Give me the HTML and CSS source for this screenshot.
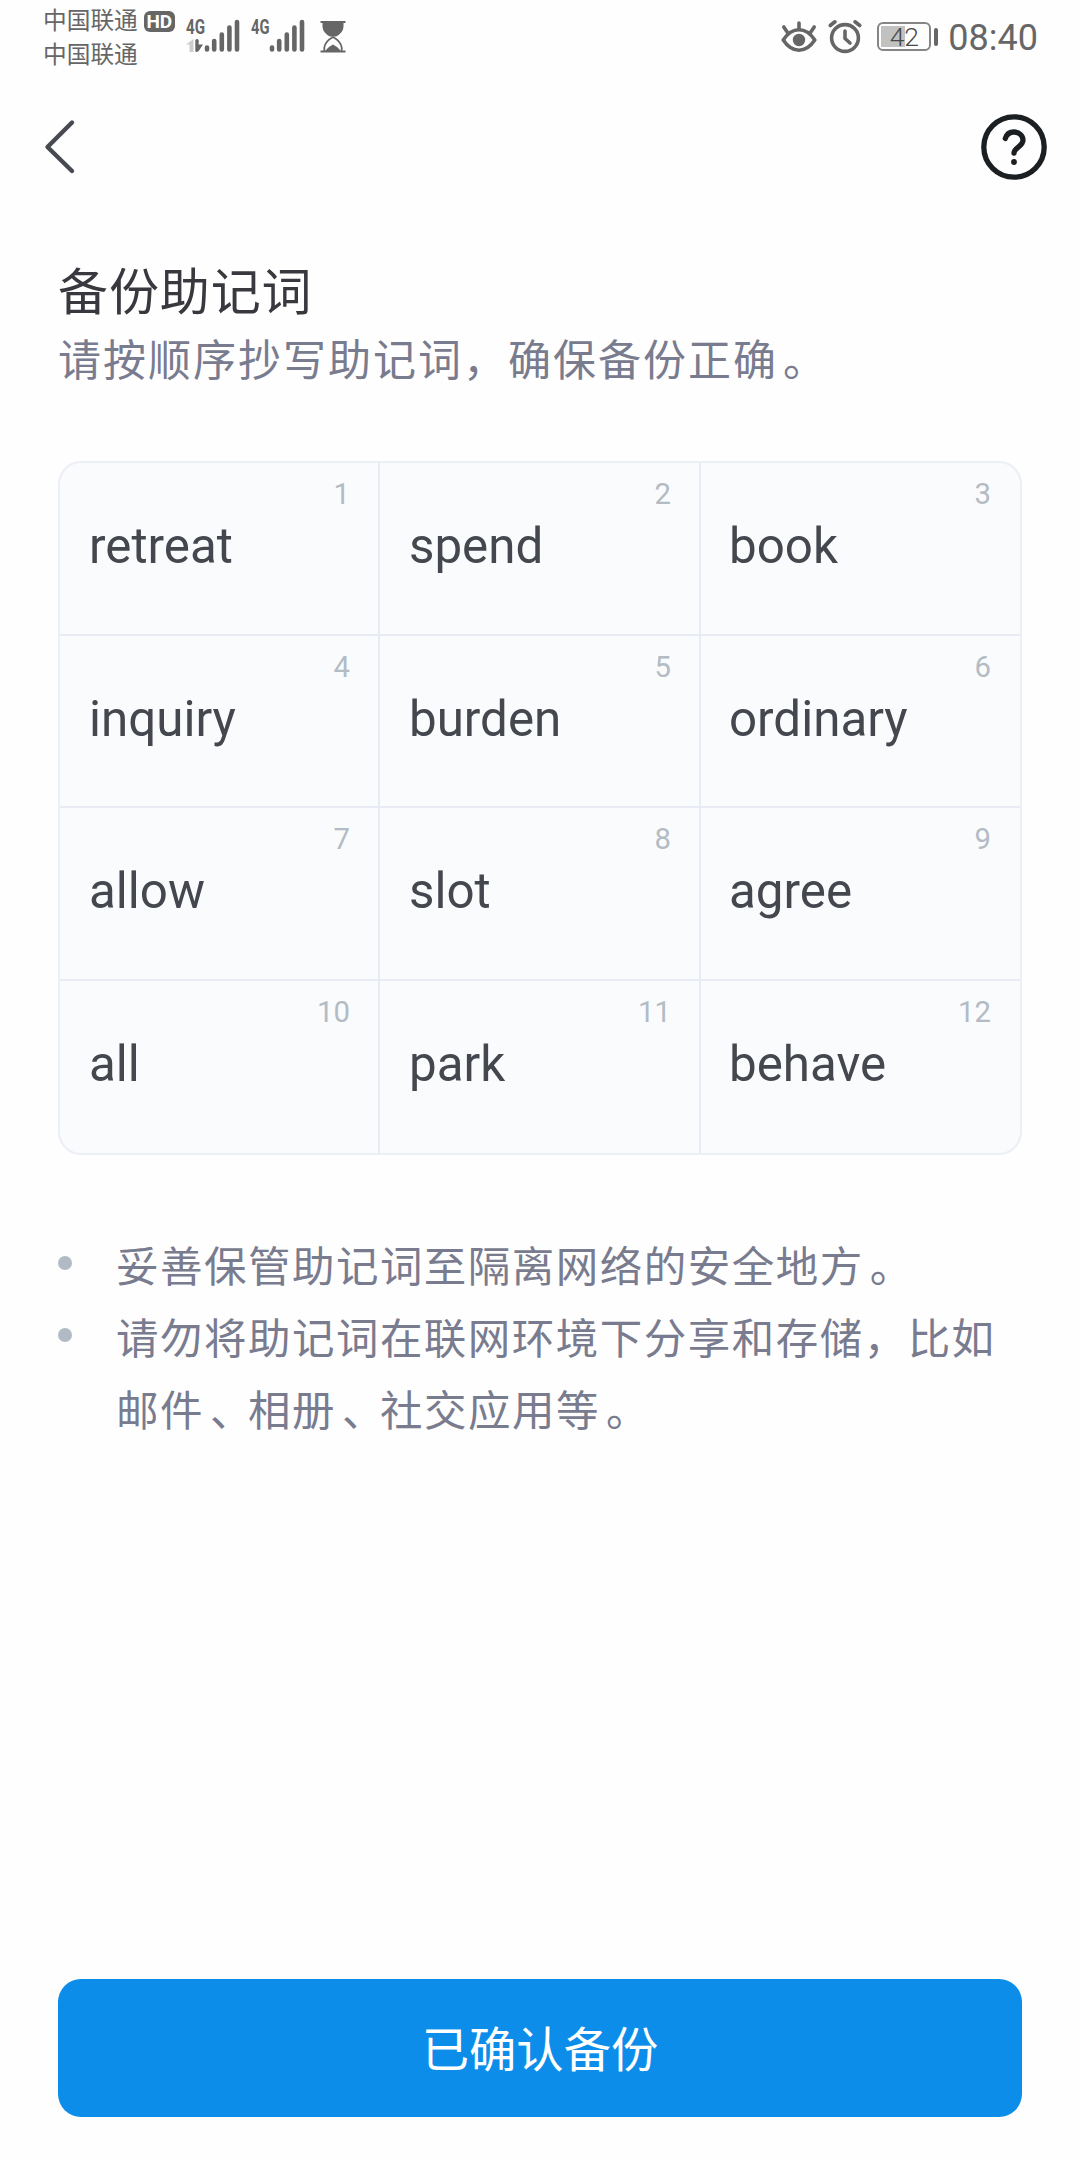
FILE: index.html
```html
<!DOCTYPE html>
<html lang="zh-CN">
<head>
<meta charset="utf-8">
<title>备份助记词</title>
<link rel="stylesheet" href="styles.css">
</head>
<body>
<div class="screen">
  <header class="status">
    <div class="status-left">
      <div class="carriers">
        <div class="carrier">中国联通<span class="hd">HD</span></div>
        <div class="carrier">中国联通</div>
      </div>
      <svg class="signal" width="54" height="36" viewBox="0 0 54 36">
        <text x="0" y="16.5" textLength="19" lengthAdjust="spacingAndGlyphs">4G</text>
        <path d="M0 27.5 7.5 22V35H3.5V27.5Z" fill="#ccc"/>
        <path d="M9.3 23 Q11 21 12.7 23V27.5H17L12.7 34 Q10 36 9.3 34Z"/>
        <path class="bars" d="M21 30.5V32.5M28.2 24V32.5M35.8 17.5V32.5M43.4 10.5V32.5M51 5V32.5"/>
      </svg>
      <svg class="signal second" width="54" height="36" viewBox="0 0 54 36">
        <text x="0" y="16.5" textLength="18.5" lengthAdjust="spacingAndGlyphs">4G</text>
        <path class="bars" d="M21 30.5V32.5M28.2 24V32.5M35.8 17.5V32.5M43.4 10.5V32.5M51 5V32.5"/>
      </svg>
      <svg class="hourglass" width="26" height="32" viewBox="0 0 26 32">
        <path d="M.5 0H25.5V2H23.5V6Q23 12 16 15.5H10Q3 12 2.5 6V2H.5Z"/>
        <path d="M4.3 30V26.5Q5 20.5 13 16 21 20.5 21.7 26.5V30" fill="none" stroke="#666" stroke-width="1.8"/>
        <path d="M5 30Q8.500 25.500 13 23.500 17.500 25.500 21 30ZM.5 29.500H25.500V31.500H.5Z"/>
      </svg>
    </div>
    <div class="status-right">
      <svg class="eye" width="36" height="32" viewBox="0 0 36 32">
        <path d="M2.200 19Q9 8.800 18 8.800T33.800 19Q27 29.200 18 29.200T2.200 19Z" fill="none" stroke="#666" stroke-width="3.6" stroke-linejoin="round"/>
        <circle cx="18" cy="19" r="6.200"/>
        <path d="M18 2V8M2.800 6 6.500 11.500M33.200 6 29.500 11.500" stroke="#666" stroke-width="3.600" stroke-linecap="round"/>
      </svg>
      <svg class="alarm" width="34" height="34" viewBox="0 0 34 34">
        <circle cx="17" cy="18" r="13.400" fill="none" stroke="#666" stroke-width="3.600"/>
        <path d="M2.200 5.500 7 1.800M31.800 5.500 27 1.800M17 11V18.500L22 23" fill="none" stroke="#666" stroke-width="3.600" stroke-linecap="round" stroke-linejoin="round"/>
      </svg>
      <div class="battery"><div class="cell"><span class="pct">42</span></div><div class="cap"></div></div>
      <div class="time">08:40</div>
    </div>
  </header>
  <nav class="nav">
    <svg width="32" height="56" viewBox="0 0 32 56">
      <path d="M28 3.500 3.500 28 28 52" fill="none" stroke="#484a52" stroke-width="4.400" stroke-linecap="round" stroke-linejoin="round"/>
    </svg>
    <svg width="66" height="66" viewBox="0 0 66 66">
      <g fill="none" stroke="#1b1f22" stroke-width="5.300" stroke-linecap="round">
        <circle cx="33" cy="33" r="30.200"/>
        <path d="M24.300 24.500C25.500 20.500 28.800 18 33 18 38 18 42 21.700 42 26.300 42 32.500 33 33.500 33 39"/>
      </g>
      <circle cx="33" cy="48" r="2.900" fill="#1b1f22"/>
    </svg>
  </nav>
  <main class="content">
    <h1 class="title">备份助记词</h1>
    <p class="subtitle">请按顺序抄写助记词，确保备份正确<span class="pn">。</span></p>
    <ol class="words">
      <li class="word"><span class="num">1</span>retreat</li>
      <li class="word"><span class="num">2</span>spend</li>
      <li class="word"><span class="num">3</span>book</li>
      <li class="word"><span class="num">4</span>inquiry</li>
      <li class="word"><span class="num">5</span>burden</li>
      <li class="word"><span class="num">6</span>ordinary</li>
      <li class="word"><span class="num">7</span>allow</li>
      <li class="word"><span class="num">8</span>slot</li>
      <li class="word"><span class="num">9</span>agree</li>
      <li class="word"><span class="num">10</span>all</li>
      <li class="word"><span class="num">11</span>park</li>
      <li class="word"><span class="num">12</span>behave</li>
    </ol>
    <ul class="tips">
      <li class="tip"><i class="dot"></i><p class="tip-text">妥善保管助记词至隔离网络的安全地方<span class="pn">。</span></p></li>
      <li class="tip"><i class="dot"></i><p class="tip-text">请勿将助记词在联网环境下分享和存储，比如<br>邮件<span class="pn">、</span>相册<span class="pn">、</span>社交应用等<span class="pn">。</span></p></li>
    </ul>
  </main>
  <button class="confirm" type="button">已确认备份</button>
</div>
</body>
</html>
```
FILE: styles.css
```css
* { box-sizing: border-box; }
body, h1, p, ol, ul { margin: 0; padding: 0; }
body { background: #fefefe; font-family: Roboto, "Noto Sans CJK SC", sans-serif; }
.screen { width: 1080px; height: 2160px; display: flex; flex-direction: column; overflow: hidden; }
svg { display: block; flex: none; overflow: visible; }

.status { height: 80px; display: flex; justify-content: space-between; padding: 0 42px 0 43px; color: #666; }
.status svg { fill: #666; }
.status-left, .status-right { display: flex; align-items: flex-start; }
.carriers { width: 143px; padding-top: 4px; }
.carrier { display: flex; align-items: center; height: 34px; font-size: 23.700px; line-height: 34px; white-space: nowrap; }
.hd { width: 31px; height: 21px; margin-left: 6px; border-radius: 6px; background: #666; color: #fefefe; font-size: 19px; font-weight: 700; line-height: 21px; text-align: center; }
.signal { margin-top: 17px; }
.signal text { font-family: Roboto, sans-serif; font-size: 20.500px; font-weight: 700; }
.signal .bars { stroke: #666; stroke-width: 4.600px; stroke-linecap: round; fill: none; }
.second { margin-left: 11px; }
.hourglass { margin: 20.500px 0 0 15px; }
.eye { margin-top: 21px; }
.alarm { margin: 20px 0 0 11px; }
.battery { display: flex; align-items: center; margin: 22px 0 0 15px; }
.cell { width: 54px; height: 29px; border: 2px solid #858585; border-radius: 6px; padding: 2px; background: linear-gradient(#c1c1c1, #c1c1c1) 2px 2px / 24px 21px no-repeat; }
.pct { display: block; font-size: 26.500px; font-weight: 300; line-height: 22px; text-align: center; color: #484848; }
.cap { width: 4px; height: 18px; margin-left: 3px; border-radius: 2px; background: #666; }
.time { margin: 17px 0 0 10px; font-size: 36px; line-height: 43px; }

.nav { height: 134px; display: flex; justify-content: space-between; align-items: center; padding: 0 33px 0 44px; }

.content { flex: 1; padding: 0 58px; }
.title { margin-top: 42px; color: #39383f; font-size: 50px; font-weight: 400; line-height: 74px; letter-spacing: .9px; }
.subtitle { margin-top: -1px; padding-bottom: 68px; color: #797b8e; font-size: 43px; line-height: 64px; letter-spacing: 2px; }
.pn { margin-left: 5px; letter-spacing: -3.650px; }

.words { display: grid; grid-template-columns: 318px 319px 319px; grid-template-rows: 171px 170px 171px 172px; gap: 2px; width: 964px; border: 2px solid #eceff5; border-radius: 23px; overflow: hidden; background: #e9ebf4; list-style: none; }
.word { display: flex; flex-direction: column; padding: 13px 28px 0 29px; background: #fafbfd; color: #45474f; font-size: 49.300px; line-height: 58px; }
.word:nth-child(3n) { padding: 13px 29px 0 28px; }
.num { align-self: flex-end; margin-bottom: 5px; color: #b3bbc4; font-size: 29.300px; line-height: 36px; }

.tips { padding-top: 77px; list-style: none; }
.tip { display: flex; }
.dot { flex: none; width: 14px; height: 14px; margin: 24px 44px 0 0; border-radius: 50%; background: #b1bac5; }
.tip-text { color: #797b8e; font-size: 42.500px; line-height: 72px; letter-spacing: 1.480px; white-space: nowrap; }
.tip-text .pn { margin-left: 6px; letter-spacing: -4.500px; }

.confirm { flex: none; height: 138px; margin: 0 58px 43px; padding: 7px 0 0; border: 0; border-radius: 23px; background: #0b8de9; color: #fff; font: 400 47.300px/131px Roboto, "Noto Sans CJK SC", sans-serif; }
```
